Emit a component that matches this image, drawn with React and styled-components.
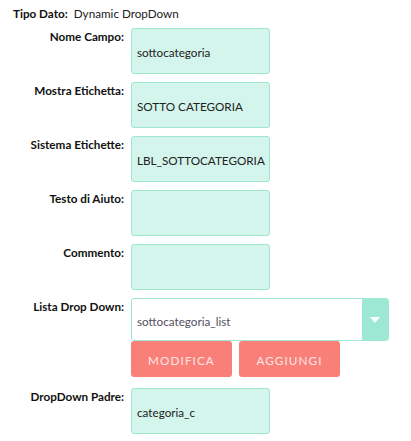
import React from 'react';
import styled, { createGlobalStyle } from 'styled-components';

const GlobalStyle = createGlobalStyle`
  body {
    margin: 0;
    background: #ffffff;
    font-family: Lato, "Open Sans", sans-serif;
    font-size: 11.7px;
    color: #222;
  }
`;

const Page = styled.div`
  width: 411px;
  height: 441px;
  padding-top: 5px;
  box-sizing: border-box;
`;

const TypeRow = styled.div`
  display: flex;
  gap: 6px;
  padding-left: 13px;
  line-height: 16px;
  margin-bottom: 7px;
`;

const TypeLabel = styled.span`
  font-weight: bold;
  color: #111;
`;

const TypeValue = styled.span`
  color: #222;
`;

const Form = styled.div`
  display: grid;
  grid-template-columns: 124px 258px;
  column-gap: 7px;
  row-gap: 8px;
`;

const Label = styled.div`
  text-align: right;
  font-weight: bold;
  line-height: 16px;
  color: #111;
`;

const Field = styled.div`
  width: 139px;
  height: 46px;
  box-sizing: border-box;
  background: #d4f5ec;
  border: 1px solid #9fe6d2;
  border-radius: 3px;
  display: flex;
  align-items: center;
  padding: 2px 6px 0 5px;
  color: #222;
`;

const DropCell = styled.div`
  display: flex;
  flex-direction: column;
  margin-bottom: 3px;
`;

const Select = styled.div`
  display: flex;
  height: 43px;
  box-sizing: border-box;
  border: 1px solid #9fe6d2;
  border-radius: 3px;
  background: #fff;
  overflow: hidden;
`;

const SelectText = styled.div`
  flex: 1;
  display: flex;
  align-items: center;
  padding: 3px 0 0 5px;
  color: #534f60;
`;

const Arrow = styled.div`
  width: 26px;
  background: #9de8d5;
  display: flex;
  align-items: center;
  justify-content: center;
`;

const Buttons = styled.div`
  display: flex;
  gap: 7px;
`;

const Button = styled.button`
  width: ${p => p.w}px;
  height: 36px;
  border: none;
  border-radius: 3px;
  background: #f98079;
  color: #fde6e4;
  font-family: Lato, "Open Sans", sans-serif;
  font-size: 11.7px;
  letter-spacing: 1.1px;
  text-transform: uppercase;
  padding: 2px 0 0;
`;

const fields = [
  ['Nome Campo:', 'sottocategoria'],
  ['Mostra Etichetta:', 'SOTTO CATEGORIA'],
  ['Sistema Etichette:', 'LBL_SOTTOCATEGORIA'],
  ['Testo di Aiuto:', ''],
  ['Commento:', '']
];

const App = () => (
  <Page>
    <GlobalStyle />
    <TypeRow>
      <TypeLabel>Tipo Dato:</TypeLabel>
      <TypeValue>Dynamic DropDown</TypeValue>
    </TypeRow>
    <Form>
      {fields.map(([label, value]) => (
        <React.Fragment key={label}>
          <Label>{label}</Label>
          <Field>{value}</Field>
        </React.Fragment>
      ))}
      <Label>Lista Drop Down:</Label>
      <DropCell>
        <Select>
          <SelectText>sottocategoria_list</SelectText>
          <Arrow>
            <svg width="10" height="6" viewBox="0 0 10 6">
              <path d="M0 0 L10 0 L5 6 Z" fill="#fff" />
            </svg>
          </Arrow>
        </Select>
        <Buttons>
          <Button w={101}>Modifica</Button>
          <Button w={101}>Aggiungi</Button>
        </Buttons>
      </DropCell>
      <Label>DropDown Padre:</Label>
      <Field>categoria_c</Field>
    </Form>
  </Page>
);

export default App;
